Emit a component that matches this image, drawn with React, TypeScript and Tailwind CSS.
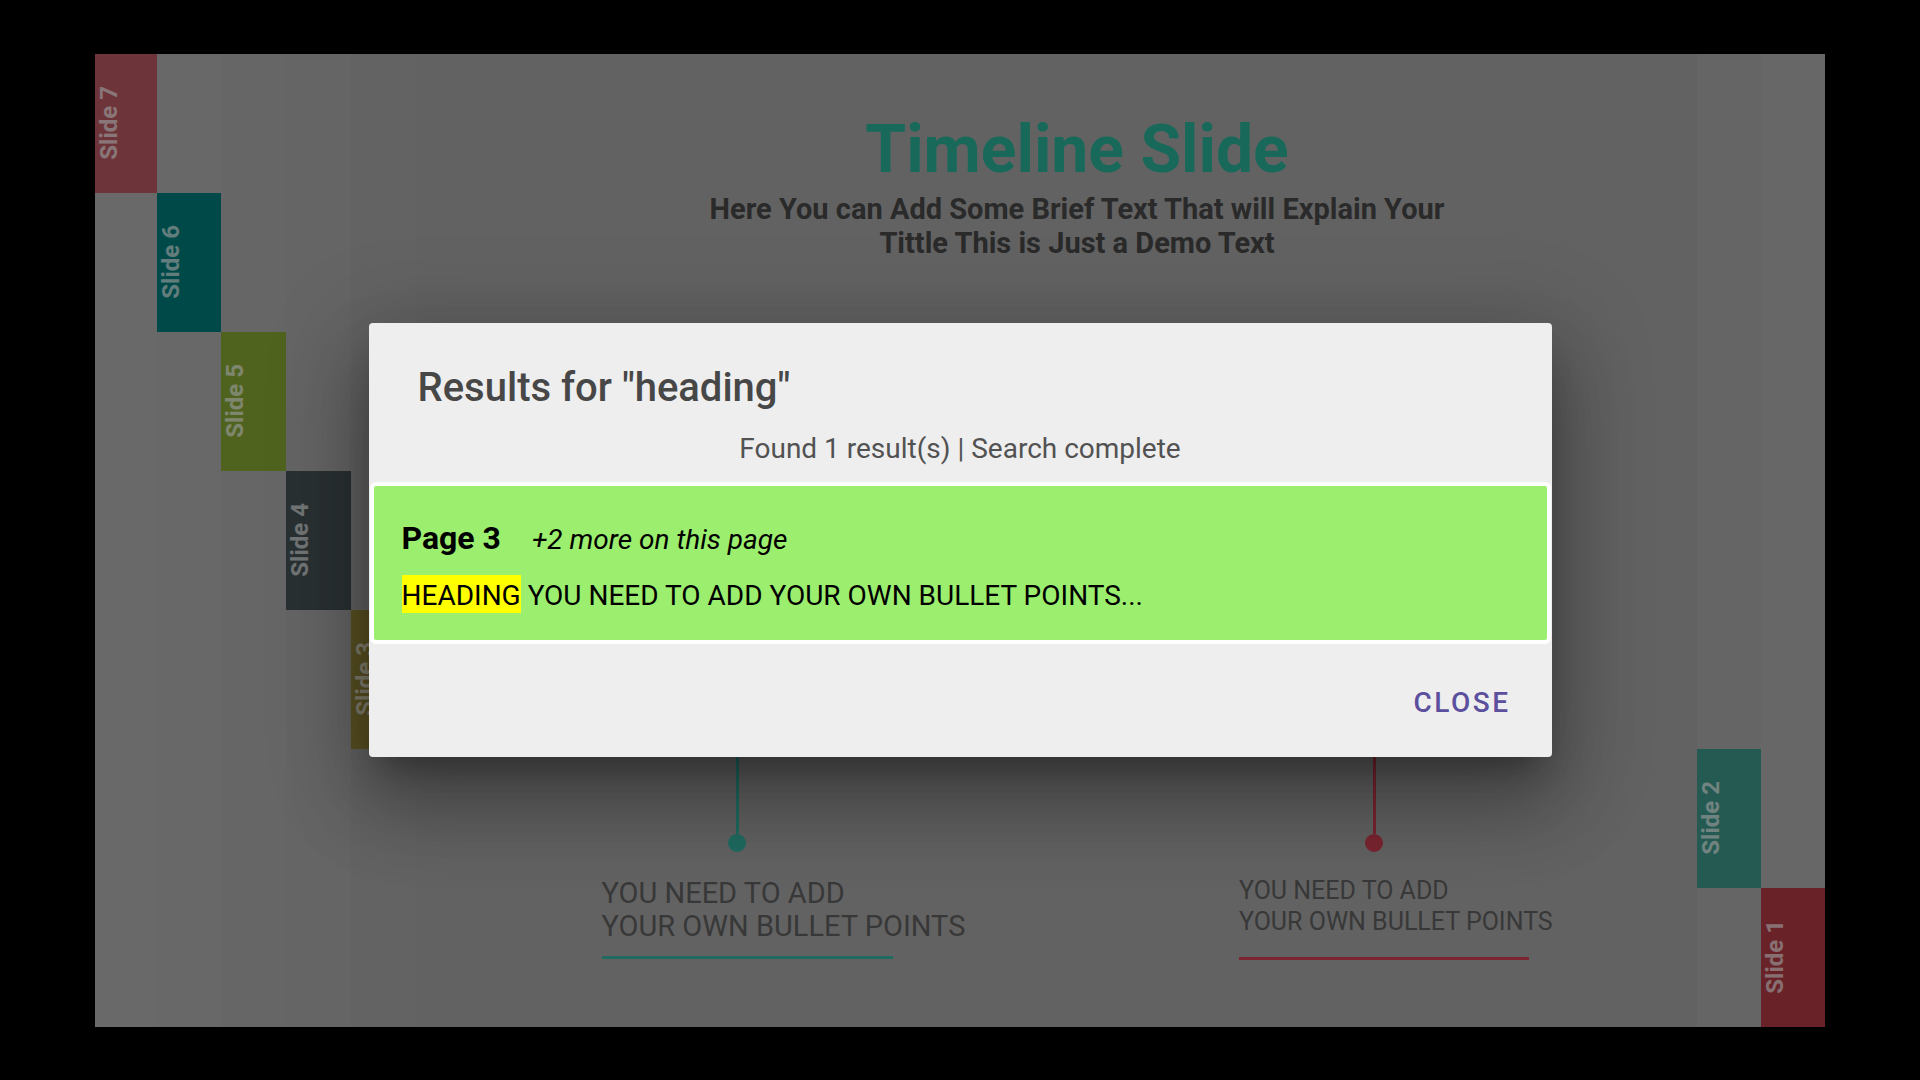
import React from 'react';

interface Tab {
    label: string;
    col: string;
    row: string;
    color: string;
}

const leftTabs: Tab[] = [
    { label: 'Slide 7', col: 'col-start-1', row: 'row-start-1', color: 'bg-[#b65861]' },
    { label: 'Slide 6', col: 'col-start-2', row: 'row-start-2', color: 'bg-[#007b7b]' },
    { label: 'Slide 5', col: 'col-start-3', row: 'row-start-3', color: 'bg-[#84a535]' },
    { label: 'Slide 4', col: 'col-start-4', row: 'row-start-4', color: 'bg-[#465355]' },
    { label: 'Slide 3', col: 'col-start-5', row: 'row-start-5', color: 'bg-[#988939]' },
];

const rightTabs: Tab[] = [
    { label: 'Slide 2', col: 'col-start-1', row: 'row-start-6', color: 'bg-[#3c9689]' },
    { label: 'Slide 1', col: 'col-start-2', row: 'row-start-7', color: 'bg-[#ad3944]' },
];

function SlideTab({ tab }: { tab: Tab }) {
    return (
        <div className={`${tab.col} ${tab.row} ${tab.color} flex items-center pl-[2px]`}>
            <span className="[writing-mode:vertical-rl] rotate-180 text-[24px] leading-[24px] font-bold text-white/65">
                {tab.label}
            </span>
        </div>
    );
}

export default function App() {
    return (
        <div className="relative h-[1080px] w-[1920px] overflow-hidden bg-black font-['Roboto',sans-serif]">
            <div className="flex h-full w-full items-center justify-center">
                {/* Slide */}
                <div className="flex h-[973px] w-[1730px] bg-[#a4a4a4]">
                    {/* Left tabs */}
                    <div className="grid w-[322px] grid-cols-[62px_64px_65px_65px_66px] grid-rows-7">
                        <div className="col-start-1 row-start-1 row-span-7 bg-[#b0b0b0]" />
                        <div className="col-start-2 row-start-1 row-span-7 bg-[#adadad]" />
                        <div className="col-start-3 row-start-1 row-span-7 bg-[#aaaaaa]" />
                        <div className="col-start-4 row-start-1 row-span-7 bg-[#a8a8a8]" />
                        <div className="col-start-5 row-start-1 row-span-7 bg-[#a6a6a6]" />
                        {leftTabs.map((t) => (
                            <SlideTab key={t.label} tab={t} />
                        ))}
                    </div>

                    {/* Content */}
                    <div className="flex flex-1 flex-col">
                        <div className="pl-[40px] pt-[56px] text-center">
                            <h1 className="text-[66px] leading-[79px] font-bold text-[#28b096]">Timeline Slide</h1>
                            <p className="mt-[3px] text-[29px] leading-[34px] font-bold text-[#464646]">
                                Here You can Add Some Brief Text That will Explain Your
                                <br />
                                Tittle This is Just a Demo Text
                            </p>
                        </div>

                        <div className="mt-auto grid grid-cols-2 items-start pb-[67px]">
                            {/* Teal item */}
                            <div className="flex flex-col items-center">
                                <div className="h-[215px] w-[3px] bg-[#34b2a0]" />
                                <div className="h-[18px] w-[18px] rounded-full bg-[#34b2a0]" />
                                <div className="ml-[20px] mt-[25px] w-[291px]">
                                    <p className="whitespace-nowrap text-[29px] leading-[33px] text-[#5e5e5e]">
                                        YOU NEED TO ADD
                                        <br />
                                        YOUR OWN BULLET POINTS
                                    </p>
                                    <div className="mt-[13px] h-[3px] w-full bg-[#34b2a0]" />
                                </div>
                            </div>

                            {/* Red item */}
                            <div className="flex flex-col items-center">
                                <div className="-ml-[6px] h-[215px] w-[3px] bg-[#cc3e50]" />
                                <div className="-ml-[6px] h-[18px] w-[18px] rounded-full bg-[#cc3e50]" />
                                <div className="ml-[14px] mt-[23px] w-[290px]">
                                    <p className="whitespace-nowrap text-[25px] leading-[31px] text-[#5e5e5e]">
                                        YOU NEED TO ADD
                                        <br />
                                        YOUR OWN BULLET POINTS
                                    </p>
                                    <div className="mt-[20px] h-[3px] w-full bg-[#cc3e50]" />
                                </div>
                            </div>
                        </div>
                    </div>

                    {/* Right tabs */}
                    <div className="grid w-[128px] grid-cols-2 grid-rows-7">
                        <div className="col-start-1 row-start-1 row-span-7 bg-[#a8a8a8]" />
                        <div className="col-start-2 row-start-1 row-span-7 bg-[#acacac]" />
                        {rightTabs.map((t) => (
                            <SlideTab key={t.label} tab={t} />
                        ))}
                    </div>
                </div>
            </div>

            {/* Backdrop + dialog */}
            <div className="absolute inset-0 flex items-center justify-center bg-black/40">
                <div className="w-[1183px] rounded-[4px] bg-[#eeeeee] shadow-[0_48px_76px_6px_rgba(0,0,0,0.22),0_18px_92px_16px_rgba(0,0,0,0.18),0_22px_30px_-14px_rgba(0,0,0,0.3)]">
                    <h2 className="pl-[49px] pt-[41px] text-[40px] leading-[48px] font-medium text-[#474747]">
                        Results for "heading"
                    </h2>
                    <p className="mt-[19px] text-center text-[28px] leading-[36px] text-[#525252]">
                        Found 1 result(s) | Search complete
                    </p>

                    <div className="mx-[1px] mt-[15px] rounded-[6px] border-4 border-white bg-[#9cee6e] pb-[26px] pl-[28px] pt-[34px] text-black">
                        <div className="flex items-baseline">
                            <span className="text-[32px] leading-[36px] font-bold">Page 3</span>
                            <span className="ml-[31px] text-[28px] leading-[36px] italic">+2 more on this page</span>
                        </div>
                        <p className="mt-[20px] text-[28px] leading-[36px]">
                            <mark className="bg-[#ffff00] pb-[1px] pt-[4px] text-black">HEADING</mark> YOU NEED TO ADD YOUR OWN BULLET POINTS...
                        </p>
                    </div>

                    <div className="flex justify-end pb-[36px] pr-[41px] pt-[41px]">
                        <button className="text-[28px] leading-[36px] font-medium tracking-[2.5px] text-[#5b4f9e]">
                            CLOSE
                        </button>
                    </div>
                </div>
            </div>
        </div>
    );
}
